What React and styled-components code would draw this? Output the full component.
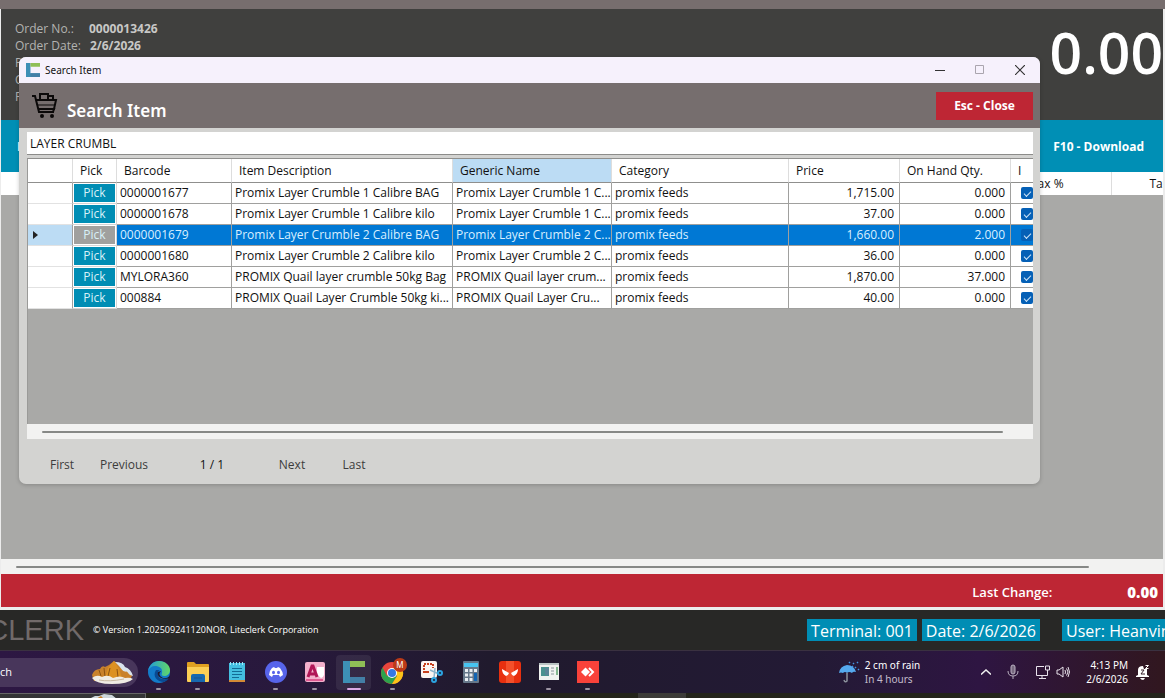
import styled, { createGlobalStyle } from "styled-components";

const orderInfo = [
    { label: "Order No.:", value: "0000013426" },
    { label: "Order Date:", value: "2/6/2026" },
    { label: "P", value: "" },
    { label: "C", value: "" },
    { label: "P", value: "" },
];

const items = [
    { barcode: "0000001677", name: "Promix Layer Crumble 1 Calibre BAG", generic: "Promix Layer Crumble 1 C...", price: "1,715.00", qty: "0.000" },
    { barcode: "0000001678", name: "Promix Layer Crumble 1 Calibre kilo", generic: "Promix Layer Crumble 1 C...", price: "37.00", qty: "0.000" },
    { barcode: "0000001679", name: "Promix Layer Crumble 2 Calibre BAG", generic: "Promix Layer Crumble 2 C...", price: "1,660.00", qty: "2.000", selected: true },
    { barcode: "0000001680", name: "Promix Layer Crumble 2 Calibre kilo", generic: "Promix Layer Crumble 2 C...", price: "36.00", qty: "0.000" },
    { barcode: "MYLORA360", name: "PROMIX Quail layer crumble 50kg Bag", generic: "PROMIX Quail layer crum...", price: "1,870.00", qty: "37.000" },
    { barcode: "000884", name: "PROMIX Quail Layer Crumble 50kg ki...", generic: "PROMIX Quail Layer Cru...", price: "40.00", qty: "0.000" },
];

const Logo = ({ size }) => (
    <svg width={size} height={size} viewBox="0 0 22 22">
        <path d="M0 0h7v16h15v6H0z" fill="#3d8fb5" />
        <path d="M7 0h15v6H7z" fill="#8fbf56" />
        <path d="M7 16h15v6H7z" fill="#437fa6" />
    </svg>
);

const Cart = () => (
    <svg width="26" height="26" viewBox="0 0 26 26" fill="none" stroke="#0b0909" strokeWidth="2">
        <path d="M0 3h3l4 16h15" />
        <path d="M4 7h20l-2 9H7" />
        <path d="M8 7V1h8v6M16 3h5v4" />
        <path d="M7 16h15l-1 3" />
        <path d="M6 12h17" strokeWidth="1" />
        <circle cx="10" cy="23" r="2" fill="#0b0909" stroke="none" />
        <circle cx="20" cy="23" r="2" fill="#0b0909" stroke="none" />
    </svg>
);

const Mountain = () => (
    <svg width="44" height="24" viewBox="0 0 44 24">
        <path d="M1 15q2-6 8-6 2-4 5-2l4-2 5-4 5 3q3 1 5 4 6 1 8 8l-3 5H3z" fill="#c9822b" />
        <path d="M17 8l6-7 5 8 3 9H14z" fill="#dc9122" />
        <path d="M8 10l2 6M13 8l1 9M19 8l-2 8M26 9l1 8" stroke="#8c5312" strokeWidth="1" />
        <path d="M24 2q8 0 10 5 6 2 8 9-4-1-6-4l-4-1-4-5z" fill="#d9e3ec" />
        <path d="M35 12l3 5M31 11l3 7" stroke="#c9822b" strokeWidth="2" />
        <path d="M1 18q5-4 10-1 6-3 11 1 7-3 12 0 5-1 8 1-5 5-21 5Q5 24 1 18z" fill="#f0ece4" />
        <path d="M8 20q10 2 25-1" stroke="#c8b9a0" fill="none" />
    </svg>
);

const Edge = () => (
    <svg width="22" height="22" viewBox="0 0 22 22">
        <defs>
            <linearGradient id="edgeTop" x1="0" x2="1">
                <stop offset="0" stopColor="#229bd8" />
                <stop offset="1" stopColor="#62d867" />
            </linearGradient>
        </defs>
        <circle cx="11" cy="11" r="11" fill="#137bc9" />
        <path d="M0 10C1 4 6 0 11 0c6 0 11 4 11 9 0 4-3 6-6 6-2 0-3-1-2-3 1-5-3-7-7-7-3 0-6 2-7 5z" fill="url(#edgeTop)" />
        <path d="M8 9c-4 6 1 12 8 12 2-1 4-2 5-4-6 3-12 0-11-5 0-2 1-3 2-3z" fill="#0a4a92" />
        <path d="M13 10q-4 4 2 7 3 1 7-2v2q-3 1-6 1-8-2-6-7z" fill="#20182f" />
    </svg>
);

const Folder = () => (
    <svg width="22" height="22" viewBox="0 0 22 22">
        <path d="M0 2q0-1 1-1h6l2 2h12q1 0 1 1v5H0z" fill="#e0a021" />
        <path d="M0 6h22v14q0 1-1 1H1q-1 0-1-1z" fill="#fccf55" />
        <path d="M4 21v-6q0-2 2-2h10q2 0 2 2v6z" fill="#1769b0" />
        <path d="M7 17h8" stroke="#1a5590" />
    </svg>
);

const Notepad = () => (
    <svg width="18" height="22" viewBox="0 0 18 22">
        <path d="M1 2h16v18H1z" fill="#44bfe0" />
        <path d="M1 19h16v2H1z" fill="#d28a36" />
        <path d="M2.500 1v3M5.500 1v3M8.500 1v3M11.500 1v3M14.500 1v3" stroke="#9fe6f7" />
        <path d="M4 7.500h10M4 10.500h10M4 13.500h10M4 16.500h7" stroke="#126b94" />
    </svg>
);

const Discord = () => (
    <svg width="22" height="22" viewBox="0 0 22 22">
        <circle cx="11" cy="11" r="11" fill="#5764ea" />
        <path d="M7 7l2-1 1 1h2l1-1 2 1q3 4 3 7l-3 2-1-2H8l-1 2-3-2q0-4 3-7z" fill="#fff" />
        <ellipse cx="8.500" cy="11.500" rx="1.500" ry="1.700" fill="#5764ea" />
        <ellipse cx="13.500" cy="11.500" rx="1.500" ry="1.700" fill="#5764ea" />
    </svg>
);

const Access = () => (
    <svg width="20" height="20" viewBox="0 0 20 20">
        <rect width="20" height="20" rx="2" fill="#f3b0cc" />
        <path d="M12 5h7v8q-1 3-3 3-4-3-4-6z" fill="#fff" />
        <path d="M3 15L7 4h1l4 11M5 12h6" fill="none" stroke="#b01657" strokeWidth="3" />
        <path d="M1 18h17" stroke="#df5b92" strokeWidth="2" />
    </svg>
);

const Chrome = () => (
    <svg width="30" height="28" viewBox="0 0 30 28">
        <circle cx="14" cy="15" r="11" fill="#e8453c" />
        <path d="M4.500 9.500A11 11 0 0 0 14 26l5-8-5-3-5 3z" fill="#2da24c" />
        <path d="M14 26a11 11 0 0 0 10-16H14l5 8z" fill="#fbc318" />
        <circle cx="14" cy="15" r="5" fill="#fff" />
        <circle cx="14" cy="15" r="4" fill="#3478e5" />
        <circle cx="22" cy="7" r="7" fill="#bd3a17" />
        <text x="22" y="10" textAnchor="middle" fontSize="8" fontFamily="Noto Sans, sans-serif" fill="#fff">M</text>
    </svg>
);

const Snip = () => (
    <svg width="22" height="22" viewBox="0 0 22 22">
        <rect width="16" height="17" rx="2" fill="#fbf4f2" />
        <path d="M3 12V3h9v4" fill="none" stroke="#c7401e" strokeWidth="2" strokeDasharray="2 1" />
        <path d="M4 11h4" stroke="#c7401e" strokeWidth="2" />
        <path d="M9 9l9 4M14 7l-1 10" stroke="#8cb4cc" strokeWidth="1.500" />
        <circle cx="19" cy="12" r="2" fill="none" stroke="#2ba3e0" strokeWidth="2" />
        <circle cx="13" cy="19" r="2" fill="none" stroke="#2ba3e0" strokeWidth="2" />
    </svg>
);

const Calculator = () => (
    <svg width="16" height="22" viewBox="0 0 16 22">
        <rect width="16" height="22" rx="1" fill="#66788a" />
        <path d="M1 2h14v4H1z" fill="#48c4f0" />
        <path d="M2 8h3v3H2zM6.500 8h3v3h-3zM11 8h3v3h-3zM2 12.500h3v3H2zM6.500 12.500h3v3h-3zM2 17h3v3H2zM6.500 17h3v3h-3z" fill="#e9eef2" />
        <path d="M11 12h3v8h-3z" fill="#1265b4" />
    </svg>
);

const RedMask = () => (
    <svg width="22" height="22" viewBox="0 0 22 22">
        <rect width="22" height="22" rx="3" fill="#e8300f" />
        <path d="M7 0h8v22H7z" fill="#f4502a" />
        <path d="M3 8l7 4q-1 3-3 3-4-2-4-7zM19 8l-7 4q1 3 3 3 4-2 4-7z" fill="#fff" />
    </svg>
);

const Report = () => (
    <svg width="20" height="18" viewBox="0 0 20 18">
        <rect width="20" height="17" fill="#f1f3f0" />
        <path d="M0 0h20v2H0z" fill="#bac4c4" />
        <path d="M2 4h8v9H2z" fill="#4a9290" />
        <path d="M6 5h4v7H6z" fill="#5b8597" />
        <path d="M12 5h3M12 8h3M12 11h3" stroke="#8b959d" />
        <path d="M17 4h2v8h-2z" fill="#82b68d" />
    </svg>
);

const AnyDesk = () => (
    <svg width="22" height="22" viewBox="0 0 22 22">
        <path d="M0 0h22v22H0z" fill="#f9423a" />
        <path d="M8.500 6.500L13 11l-4.500 4.500L4 11z" fill="#fff" />
        <path d="M12 7l4 4-4 4" fill="none" stroke="#fff" strokeWidth="2" />
    </svg>
);

const Umbrella = () => (
    <svg width="22" height="22" viewBox="0 0 22 22" fill="none">
        <path d="M1 12q1-7 8-8 7 0 9 7-3-1-4 1-3-2-5 0-2-2-4 0-2-1-4 0z" fill="#55a9ee" />
        <path d="M9 12v8q-2 2-3-1" stroke="#8c929c" strokeWidth="1.500" />
        <path d="M11 2l1-1M15 3l1-1M19 2l1-1M17 7l1-1M20 9l1-1M14 6l1-1" stroke="#4295e4" strokeWidth="1.500" />
    </svg>
);

const Mic = () => (
    <svg width="12" height="16" viewBox="0 0 12 16" fill="none" stroke="#b9b0c0">
        <rect x="4" y="1" width="4" height="9" rx="2" fill="#786a80" />
        <path d="M1 7q0 5 5 5t5-5M6 12v3" />
    </svg>
);

const Monitor = () => (
    <svg width="15" height="15" viewBox="0 0 15 15" fill="none" stroke="#e9e2ec">
        <path d="M9 1.500H1.500v9h11V7M4 13.500h7M7 11v2" />
        <path d="M10.500 1h4v4h-4zM12.500 5v4" />
    </svg>
);

const Speaker = () => (
    <svg width="14" height="14" viewBox="0 0 14 14" fill="none" stroke="#e9e2ec">
        <path d="M1 5h2l4-3v10L3 9H1z" />
        <path d="M9 5q1 2 0 4M10.500 3.500q3 3.500 0 7M12 2q3 5 0 10" />
    </svg>
);

const Bell = () => (
    <svg width="14" height="16" viewBox="0 0 14 16">
        <path d="M2 11V6q0-4 5-4l1 3h3v6l2 1v1H0v-1zM4 14h5q-1 2-2 2-2 0-3-2z" fill="#fff" />
        <path d="M5 6h3L5 10h4" stroke="#38202a" fill="none" />
        <path d="M9.500 1.500h3l-3 3h3" stroke="#fff" fill="none" />
    </svg>
);

const taskbarApps = [
    { name: "Edge", icon: <Edge />, running: true },
    { name: "File Explorer", icon: <Folder />, running: true },
    { name: "Notepad", icon: <Notepad /> },
    { name: "Discord", icon: <Discord />, running: true },
    { name: "Access", icon: <Access />, running: true },
    { name: "Liteclerk", icon: <Logo size={22} />, active: true },
    { name: "Chrome", icon: <Chrome />, running: true },
    { name: "Snipping Tool", icon: <Snip /> },
    { name: "Calculator", icon: <Calculator /> },
    { name: "Mask", icon: <RedMask /> },
    { name: "Report", icon: <Report />, running: true },
    { name: "AnyDesk", icon: <AnyDesk />, running: true },
];

const SearchDialog = () => (
    <Dialog role="dialog" aria-label="Search Item">
        <TitleBar>
            <Logo size={14} />
            <span>Search Item</span>
            <WindowButtons>
                <button aria-label="Minimize">
                    <svg width="10" height="10" viewBox="0 0 10 10"><path d="M0 5.500h10" stroke="#333" /></svg>
                </button>
                <button aria-label="Maximize" disabled>
                    <svg width="10" height="10" viewBox="0 0 10 10"><path d="M.5.500h8v8h-8z" stroke="#aaa5ae" fill="none" /></svg>
                </button>
                <button aria-label="Close">
                    <svg width="10" height="10" viewBox="0 0 10 10"><path d="M0 0l10 10M10 0L0 10" stroke="#333" strokeWidth="1.200" /></svg>
                </button>
            </WindowButtons>
        </TitleBar>
        <DialogHeader>
            <Cart />
            <h1>Search Item</h1>
            <CloseButton>Esc - Close</CloseButton>
        </DialogHeader>
        <DialogBody>
            <SearchBox aria-label="Search item" defaultValue="LAYER CRUMBL" />
            <GridArea>
                <ItemTable>
                    <colgroup>
                        <Col $w={45} /><Col $w={44} /><Col $w={115} /><Col $w={221} /><Col $w={159} />
                        <col /><Col $w={111} /><Col $w={111} /><Col $w={22} />
                    </colgroup>
                    <thead>
                        <tr>
                            <Head />
                            <Head>Pick</Head>
                            <Head>Barcode</Head>
                            <Head>Item Description</Head>
                            <Head $sorted>Generic Name</Head>
                            <Head>Category</Head>
                            <Head>Price</Head>
                            <Head>On Hand Qty.</Head>
                            <Head>I</Head>
                        </tr>
                    </thead>
                    <tbody>
                        {items.map((item) => (
                            <ItemRow key={item.barcode} $selected={item.selected}>
                                <MarkerCell $selected={item.selected}>
                                    {item.selected && (
                                        <svg width="5" height="8" viewBox="0 0 5 8"><path d="M0 0l5 4-5 4z" fill="#222" /></svg>
                                    )}
                                </MarkerCell>
                                <PickCell>
                                    <PickButton $selected={item.selected}>Pick</PickButton>
                                </PickCell>
                                <Cell>{item.barcode}</Cell>
                                <Cell>{item.name}</Cell>
                                <Cell>{item.generic}</Cell>
                                <Cell>promix feeds</Cell>
                                <Cell $right>{item.price}</Cell>
                                <Cell $right>{item.qty}</Cell>
                                <CheckCell>
                                    <input type="checkbox" defaultChecked aria-label={"Inventory " + item.barcode} />
                                </CheckCell>
                            </ItemRow>
                        ))}
                    </tbody>
                </ItemTable>
            </GridArea>
            <ScrollTrack><ScrollThumb $end={30} /></ScrollTrack>
            <Pager>
                <button>First</button>
                <button>Previous</button>
                <span>1 / 1</span>
                <button>Next</button>
                <button>Last</button>
            </Pager>
        </DialogBody>
    </Dialog>
);

const App = () => {
    return (
        <Page>
            <GlobalStyle />
            <TopStrip />
            <Sales>
                <OrderHeader>
                    <OrderInfo>
                        {orderInfo.map((row, i) => (
                            <div key={i}>
                                <dt>{row.label}</dt>
                                <dd>{row.value}</dd>
                            </div>
                        ))}
                    </OrderInfo>
                    <Total>0.00</Total>
                </OrderHeader>
                <Actions>
                    <button>F</button>
                    <button>F10 - Download</button>
                </Actions>
                <SalesGrid>
                    <SalesTable>
                        <thead>
                            <tr>
                                <th />
                                <TaxHead $w={80}>Tax %</TaxHead>
                                <TaxHead $w={52} $pad={38}>Tax</TaxHead>
                            </tr>
                        </thead>
                    </SalesTable>
                </SalesGrid>
                <ScrollTrack><ScrollThumb $end={74} /></ScrollTrack>
                <ChangeBar>
                    <span>Last Change:</span>
                    <strong>0.00</strong>
                </ChangeBar>
            </Sales>

            <Footer>
                <Brand><span>CLERK</span></Brand>
                <Version>© Version 1.202509241120NOR, Liteclerk Corporation</Version>
                <StatusTag>Terminal: 001</StatusTag>
                <StatusTag $gap={22}>Date: 2/6/2026</StatusTag>
                <StatusTag $clip>User: Heanvin</StatusTag>
            </Footer>

            <Taskbar>
                <TaskSearch>
                    <span>ch</span>
                    <Mountain />
                </TaskSearch>
                <Apps>
                    {taskbarApps.map((app) => (
                        <AppButton key={app.name} aria-label={app.name} $active={app.active} $running={app.running}>
                            {app.icon}
                        </AppButton>
                    ))}
                </Apps>
                <Weather>
                    <Umbrella />
                    <p>2 cm of rain<br /><span>In 4 hours</span></p>
                </Weather>
                <Tray>
                    <svg width="10" height="6" viewBox="0 0 10 6"><path d="M0 5.500L5 1l5 4.500" fill="none" stroke="#eee" strokeWidth="1.500" /></svg>
                    <Mic />
                    <Devices><Monitor /><Speaker /></Devices>
                    <Clock>4:13 PM<br />2/6/2026</Clock>
                    <Bell />
                </Tray>
            </Taskbar>
            <BottomStrip>
                <div>
                    <svg width="28" height="5" viewBox="0 0 28 5"><path d="M0 5l6-3h4l5-2 8 1 5 4z" fill="#cdd6da" /><path d="M7 5l5-3 3 3z" fill="#c9822b" /></svg>
                </div>
                <i />
            </BottomStrip>

            <SearchDialog />
        </Page>
    );
};

export default App;

const GlobalStyle = createGlobalStyle`
    * {
        box-sizing: border-box;
    }
    body {
        margin: 0;
        font-family: "Open Sans", "Noto Sans", sans-serif;
        font-size: 12px;
        line-height: 16px;
        color: #111;
    }
    button, input {
        font: inherit;
        color: inherit;
        border: none;
        background: none;
        padding: 0;
        margin: 0;
    }
    h1, p, dl, dd {
        margin: 0;
    }
    svg {
        flex-shrink: 0;
    }
`;

const Page = styled.div`
    position: relative;
    display: flex;
    flex-direction: column;
    min-height: 100vh;
    overflow: hidden;
`;

const TopStrip = styled.div`
    height: 9px;
    background-color: #776e6e;
`;

const Sales = styled.main`
    flex: 1;
    display: flex;
    flex-direction: column;
    padding: 0 2px 3px 1px;
    background-color: #ececec;
`;

const OrderHeader = styled.header`
    display: flex;
    justify-content: space-between;
    height: 111px;
    background-color: #40403e;
    overflow: hidden;
`;

const OrderInfo = styled.dl`
    padding: 11px 14px;
    color: #b3b3b1;
    line-height: 17px;
    div {
        display: flex;
        gap: 9px;
    }
    dt {
        min-width: 65px;
    }
    dd {
        font-weight: 700;
        color: #c8c8c6;
    }
`;

const Total = styled.div`
    margin-top: 8px;
    font-size: 57px;
    font-weight: 600;
    line-height: 70px;
    color: #fff;
`;

const Actions = styled.div`
    display: flex;
    justify-content: space-between;
    height: 52px;
    background-color: #008fb5;
    button {
        padding: 2px 19px 0 16px;
        color: #fff;
        font-weight: 700;
    }
`;

const SalesGrid = styled.div`
    flex: 1;
    background-color: #a9a9a7;
`;

const SalesTable = styled.table`
    width: 100%;
    table-layout: fixed;
    border-collapse: collapse;
    background-color: #fff;
    th {
        height: 23px;
        padding: 0;
        text-align: left;
        font-weight: 400;
        white-space: nowrap;
        overflow: hidden;
    }
`;

const TaxHead = styled.th`
    width: ${(props) => props.$w}px;
    && {
        padding-left: ${(props) => props.$pad || 0}px;
        border-left: ${(props) => (props.$pad ? "1px solid #ddd" : "none")};
    }
`;

const ScrollTrack = styled.div`
    display: flex;
    align-items: center;
    height: 15px;
    background-color: #f2f2f1;
`;

const ScrollThumb = styled.div`
    flex: 1;
    height: 2px;
    margin: 0 ${(props) => props.$end}px 0 15px;
    border-radius: 1px;
    background-color: #868886;
`;

const ChangeBar = styled.div`
    display: flex;
    justify-content: flex-end;
    align-items: center;
    gap: 75px;
    height: 33px;
    padding: 3px 5px 0 0;
    background-color: #be2634;
    color: #fff;
    font-size: 13px;
    font-weight: 600;
    strong {
        font-size: 15px;
    }
`;

const Footer = styled.footer`
    display: flex;
    align-items: center;
    height: 40px;
    background-color: #282826;
    color: #fff;
    overflow: hidden;
`;

const Brand = styled.div`
    display: flex;
    justify-content: flex-end;
    width: 84px;
    overflow: hidden;
    font-family: "Liberation Sans", Arial, sans-serif;
    font-size: 29px;
    line-height: 32px;
    color: #716a6a;
`;

const Version = styled.p`
    flex: 1;
    padding-left: 9px;
    font-size: 9px;
`;

const StatusTag = styled.span`
    flex-shrink: 0;
    width: ${(props) => (props.$clip ? "103px" : "auto")};
    height: 22px;
    margin-right: ${(props) => (props.$clip ? 0 : props.$gap || 5)}px;
    padding: 1px 4px 0;
    background-color: #008db4;
    font-size: 16px;
    line-height: 22px;
    white-space: nowrap;
    overflow: hidden;
`;

const Taskbar = styled.nav`
    display: flex;
    align-items: center;
    height: 43px;
    border-top: 1px solid #3a3140;
    background: linear-gradient(90deg, #2d1743, #28193c 25%, #201a2d 42%, #231a35 70%, #2e1542 84%, #31171f);
    color: #fff;
`;

const TaskSearch = styled.div`
    display: flex;
    align-items: center;
    justify-content: space-between;
    width: 138px;
    height: 29px;
    padding-right: 3px;
    border-radius: 0 14px 14px 0;
    background-color: #48365b;
    font-size: 11px;
`;

const Apps = styled.div`
    display: flex;
    flex: 1;
    gap: 4px;
    padding-left: 3px;
`;

const AppButton = styled.button`
    display: flex;
    flex-direction: column;
    align-items: center;
    justify-content: center;
    position: relative;
    width: 35px;
    height: 35px;
    border-radius: 4px;
    background-color: ${(props) => (props.$active ? "#ffffff12" : "transparent")};
    &::after {
        content: "";
        position: absolute;
        bottom: 0;
        width: ${(props) => (props.$active ? 14 : 5)}px;
        height: 2px;
        border-radius: 1px;
        background-color: ${(props) => (props.$active ? "#d9a9e4" : props.$running ? "#9c94a3" : "transparent")};
    }
`;

const Weather = styled.div`
    display: flex;
    align-items: center;
    gap: 5px;
    padding-right: 61px;
    font-family: "Noto Sans", sans-serif;
    font-size: 10px;
    line-height: 14px;
    span {
        color: #c3bccb;
    }
`;

const Tray = styled.div`
    display: flex;
    align-items: center;
    gap: 16px;
    padding-right: 15px;
`;

const Devices = styled.div`
    display: flex;
    gap: 6px;
`;

const Clock = styled.time`
    margin-right: -8px;
    font-family: "Noto Sans", sans-serif;
    font-size: 10px;
    line-height: 14px;
    text-align: right;
`;

const BottomStrip = styled.div`
    display: flex;
    height: 5px;
    background-color: #24241b;
    div {
        display: flex;
        justify-content: flex-end;
        width: 146px;
        padding-right: 28px;
        border-top: 1px solid #666;
        border-right: 1px solid #666;
        background-color: #343436;
    }
    i {
        width: 48px;
        margin-left: 492px;
        background-color: #3c3b38;
    }
`;

const Dialog = styled.section`
    position: absolute;
    top: 57px;
    left: 19px;
    right: 125px;
    border-radius: 7px;
    background-color: #d3d3d1;
    overflow: hidden;
    box-shadow: 0 1px 4px rgba(0, 0, 0, 0.2);
`;

const TitleBar = styled.div`
    display: flex;
    align-items: center;
    gap: 5px;
    height: 26px;
    padding-left: 7px;
    background-color: #f6f1fc;
    font-family: "Noto Sans", sans-serif;
    font-size: 10px;
`;

const WindowButtons = styled.div`
    display: flex;
    margin-left: auto;
    button {
        display: flex;
        align-items: center;
        justify-content: center;
        width: 40px;
        height: 26px;
    }
`;

const DialogHeader = styled.div`
    display: flex;
    align-items: center;
    gap: 9px;
    height: 45px;
    padding: 1px 7px 0 13px;
    background-color: #766e6e;
    h1 {
        padding-top: 10px;
        color: #fff;
        font-family: "Noto Sans", sans-serif;
        font-size: 17px;
        font-weight: 600;
        line-height: 24px;
    }
`;

const CloseButton = styled.button`
    width: 97px;
    height: 28px;
    margin-left: auto;
    background-color: #be2634;
    color: #fff;
    font-size: 12px;
    font-weight: 700;
`;

const DialogBody = styled.div`
    padding: 4px 7px 0 8px;
`;

const SearchBox = styled.input`
    display: block;
    width: 100%;
    height: 23px;
    margin-bottom: 3px;
    padding: 0 3px;
    border-bottom: 1px solid #8c8c8a;
    background-color: #fff;
    outline: none;
`;

const GridArea = styled.div`
    min-height: 266px;
    border-top: 1px solid #8f8f8d;
    border-left: 1px solid #9a9a98;
    background-color: #a9a9a7;
`;

const ItemTable = styled.table`
    width: 100%;
    table-layout: fixed;
    border-collapse: separate;
    border-spacing: 0;
    background-color: #fff;
`;

const Col = styled.col`
    width: ${(props) => props.$w}px;
`;

const Head = styled.th`
    height: 24px;
    padding: 0 7px;
    border-right: 1px solid #ddd;
    border-bottom: 1px solid #8f8f8d;
    background-color: ${(props) => (props.$sorted ? "#bcdcf4" : "#fff")};
    font-weight: 400;
    text-align: left;
    white-space: nowrap;
    overflow: hidden;
    &:last-child {
        border-right: none;
    }
`;

const ItemRow = styled.tr`
    background-color: ${(props) => (props.$selected ? "#0078d4" : "#fff")};
    color: ${(props) => (props.$selected ? "#d9efff" : "#111")};
`;

const Cell = styled.td`
    height: 21px;
    padding: 0 ${(props) => (props.$right ? 5 : 0)}px 0 3px;
    border-right: 1px solid #a0a09e;
    border-bottom: 1px solid #a0a09e;
    text-align: ${(props) => (props.$right ? "right" : "left")};
    white-space: nowrap;
    overflow: hidden;
`;

const MarkerCell = styled(Cell)`
    padding-left: 5px;
    border-bottom-color: #e2e2e2;
    background-color: ${(props) => (props.$selected ? "#bcdcf4" : "#fff")};
    line-height: 8px;
`;

const PickCell = styled(Cell)`
    padding: 1px;
    border-color: #d5d5d5;
    background-color: #fff;
`;

const PickButton = styled.button`
    display: block;
    width: 100%;
    height: 18px;
    background-color: ${(props) => (props.$selected ? "#a0a09e" : "#008db4")};
    color: #d8f1f8;
    line-height: 18px;
`;

const CheckCell = styled(Cell)`
    padding: 0 0 0 10px;
    border-right: none;
    input {
        display: block;
        position: relative;
        appearance: none;
        width: 12px;
        height: 12px;
        border-radius: 2px;
        background-color: #0560b6;
    }
    input:checked::after {
        content: "";
        position: absolute;
        top: 4px;
        left: 3px;
        width: 6px;
        height: 3px;
        border-left: 1px solid #cfe4f7;
        border-bottom: 1px solid #cfe4f7;
        transform: rotate(-45deg);
    }
`;

const Pager = styled.div`
    display: flex;
    align-items: center;
    gap: 2px;
    height: 45px;
    padding: 6px 0 0 5px;
    color: #3c3c3c;
    button {
        width: 60px;
    }
    span {
        width: 104px;
        padding-left: 8px;
        text-align: center;
        color: #111;
    }
`;
